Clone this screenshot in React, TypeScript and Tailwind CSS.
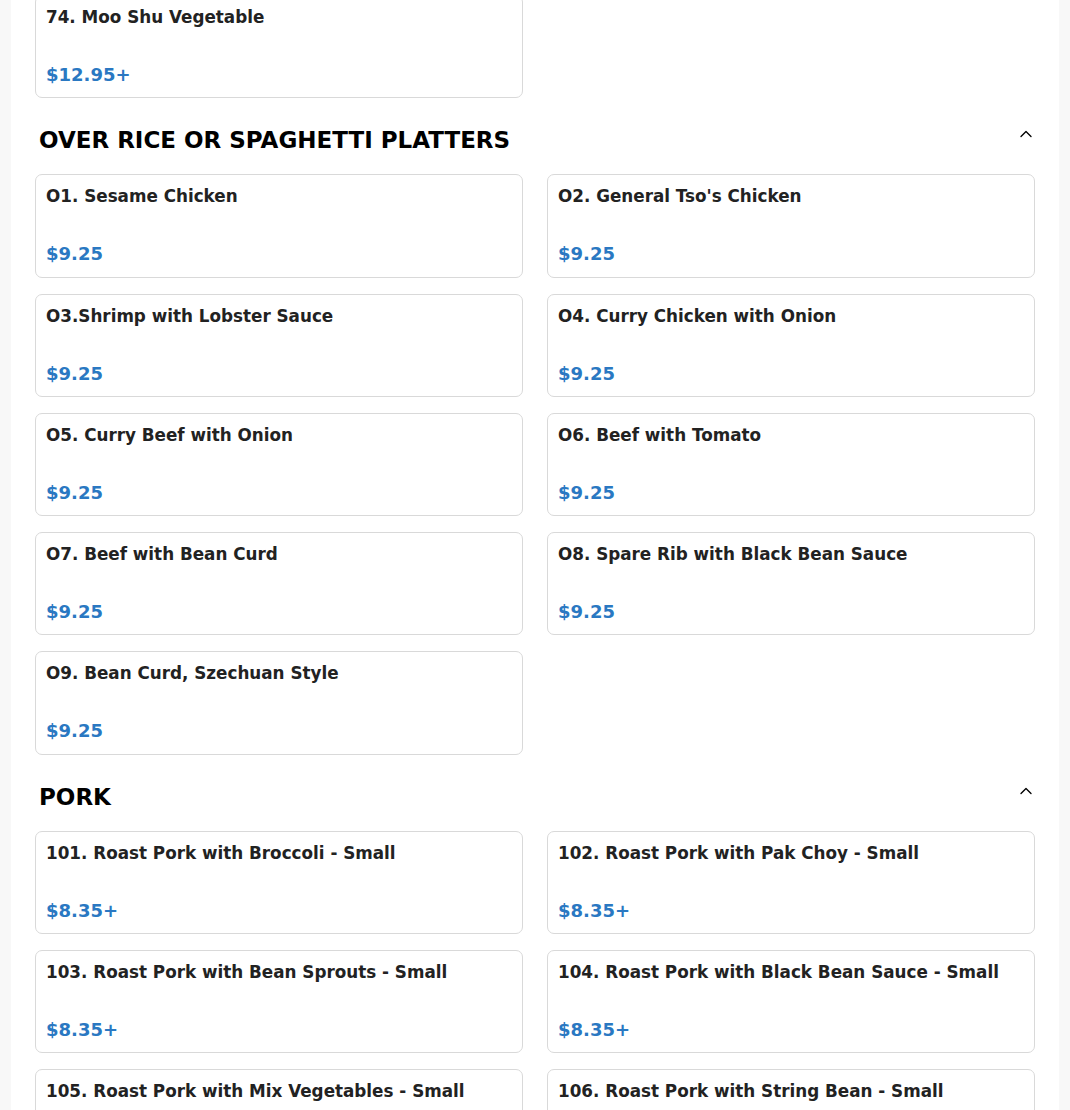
import React from "react";
import { ChevronUp } from "lucide-react";

interface MenuItem {
  name: string;
  price: string;
}

interface Section {
  title: string;
  items: MenuItem[];
}

const TOP_ITEMS: MenuItem[] = [{ name: "74. Moo Shu Vegetable", price: "$12.95+" }];

const SECTIONS: Section[] = [
  {
    title: "OVER RICE OR SPAGHETTI PLATTERS",
    items: [
      { name: "O1. Sesame Chicken", price: "$9.25" },
      { name: "O2. General Tso's Chicken", price: "$9.25" },
      { name: "O3.Shrimp with Lobster Sauce", price: "$9.25" },
      { name: "O4. Curry Chicken with Onion", price: "$9.25" },
      { name: "O5. Curry Beef with Onion", price: "$9.25" },
      { name: "O6. Beef with Tomato", price: "$9.25" },
      { name: "O7. Beef with Bean Curd", price: "$9.25" },
      { name: "O8. Spare Rib with Black Bean Sauce", price: "$9.25" },
      { name: "O9. Bean Curd, Szechuan Style", price: "$9.25" },
    ],
  },
  {
    title: "PORK",
    items: [
      { name: "101. Roast Pork with Broccoli - Small", price: "$8.35+" },
      { name: "102. Roast Pork with Pak Choy - Small", price: "$8.35+" },
      { name: "103. Roast Pork with Bean Sprouts - Small", price: "$8.35+" },
      { name: "104. Roast Pork with Black Bean Sauce - Small", price: "$8.35+" },
      { name: "105. Roast Pork with Mix Vegetables - Small", price: "$8.35+" },
      { name: "106. Roast Pork with String Bean - Small", price: "$8.35+" },
    ],
  },
];

function ItemCard({ item }: { item: MenuItem }) {
  return (
    <div className="h-[103.25px] bg-white border border-[#d9d9d9] rounded-[7px] px-[10px] pt-[9px]">
      <h3 className="text-[16.8px] leading-6 font-bold text-[#222]">{item.name}</h3>
      <p className="mt-[34px] text-[18px] leading-6 font-bold text-[#2a78c2]">{item.price}</p>
    </div>
  );
}

export default function App() {
  return (
    <div
      className="min-h-screen bg-[#f8f8f8] overflow-hidden"
      style={{ fontFamily: '"DejaVu Sans", sans-serif' }}
    >
      <div className="mx-[11px] bg-white px-6 pb-10 min-h-screen">
        {/* tail of previous section */}
        <div className="grid grid-cols-2 gap-x-6 gap-y-4 -mt-[5px]">
          {TOP_ITEMS.map((item) => (
            <ItemCard key={item.name} item={item} />
          ))}
        </div>

        {SECTIONS.map((section) => (
          <div key={section.title}>
            <div className="flex items-start justify-between pl-1 mt-[26px] mb-[18px]">
              <h2 className="text-[23px] leading-8 font-bold text-black">{section.title}</h2>
              <ChevronUp className="w-5 h-5 -mr-[1px] text-black" strokeWidth={1.6} />
            </div>
            <div className="grid grid-cols-2 gap-x-6 gap-y-4">
              {section.items.map((item) => (
                <ItemCard key={item.name} item={item} />
              ))}
            </div>
          </div>
        ))}
      </div>
    </div>
  );
}
